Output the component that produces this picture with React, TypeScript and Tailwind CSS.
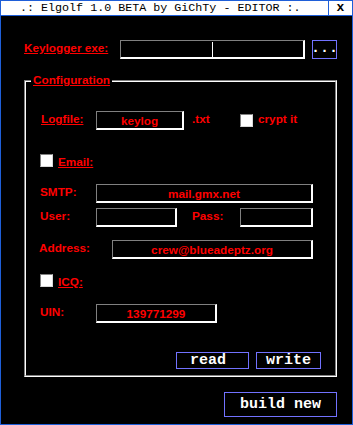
const sans = { fontFamily: "'Liberation Sans', Arial, sans-serif" }
const mono = { fontFamily: "'Liberation Mono', 'Courier New', monospace" }

const Field = ({ w, value }: { w: string; value?: string }) => (
  <div
    className={`${w} h-[19px] border-t border-l border-r-2 border-b-2 border-t-[#808080] border-l-[#808080] border-r-white border-b-white flex items-center justify-center text-[11.75px] leading-[11px] font-bold text-[#ff0000]`}
    style={sans}
  >
    {value}
  </div>
)

const Check = () => (
  <div className="w-[13px] h-[13px] bg-white border-t border-l border-r border-b border-t-[#808080] border-l-[#808080] border-r-[#d8d8d8] border-b-[#d8d8d8]" />
)

const Label = ({ children, className = "" }: { children: React.ReactNode; className?: string }) => (
  <div className={`pt-[2px] text-[11.75px] leading-[11px] font-bold text-[#ff0000] ${className}`} style={sans}>
    {children}
  </div>
)

const Btn = ({ w, h, text, className = "" }: { w: string; h: string; text: string; className?: string }) => (
  <div
    className={`${w} ${h} border border-[#7272ff] flex items-center justify-center text-white font-bold text-[15px] leading-[15px] ${className}`}
    style={mono}
  >
    {text}
  </div>
)

export default function App() {
  return (
    <div className="w-[353px] h-[425px] bg-black overflow-hidden">
      {/* title bar */}
      <div className="h-[16px] flex border border-[#1f5fd8] bg-white text-black" style={mono}>
        <div className="flex-1 pl-[19px] text-[11.7px] leading-[14px] whitespace-pre">
          .: Elgolf 1.0 BETA by GiChTy - EDITOR :.
        </div>
        <div className="w-[24px] border-l border-[#1f5fd8] flex items-center justify-center font-bold text-[13px] leading-[14px]">
          x
        </div>
      </div>

      <div className="h-[409px] flex flex-col border-l border-r border-b border-[#1f5fd8]">
        {/* keylogger exe */}
        <div className="mt-[24px] flex items-start">
          <Label className="ml-[23px] w-[96px] underline">Keylogger exe:</Label>
          <div className="w-[185px] h-[19px] border-t border-l border-r-2 border-b-2 border-t-[#808080] border-l-[#808080] border-r-white border-b-white flex items-center">
            <div className="ml-[91px] w-px h-[15px] bg-white" />
          </div>
          <Btn w="w-[25px]" h="h-[19px]" text="..." className="ml-[7px] pb-[3px]" />
        </div>

        {/* configuration group */}
        <div className="relative mt-[21px] ml-[23px] w-[313px] h-[297px] border-l border-t border-r border-b border-l-[#808080] border-t-[#808080] border-r-white border-b-white">
          <div
            className="absolute top-[-7px] left-[6px] px-[2px] bg-black text-[11.75px] leading-[11px] font-bold text-[#ff0000] underline"
            style={sans}
          >
            Configuration
          </div>
          <div className="h-full flex flex-col border-l border-t border-r border-b border-l-white border-t-white border-r-[#808080] border-b-[#808080]">
            <div className="mt-[29px] flex items-start">
              <Label className="ml-[15px] w-[55px] underline">Logfile:</Label>
              <Field w="w-[88px]" value="keylog" />
              <Label className="ml-[8px] w-[48px]">.txt</Label>
              <div className="mt-[3px]">
                <Check />
              </div>
              <Label className="ml-[5px]">crypt it</Label>
            </div>

            <div className="mt-[24px] flex items-start">
              <div className="ml-[14px]">
                <Check />
              </div>
              <Label className="ml-[5px] pt-0 underline">Email:</Label>
            </div>

            <div className="mt-[17px] flex items-start">
              <Label className="ml-[14px] w-[56px]">SMTP:</Label>
              <Field w="w-[217px]" value="mail.gmx.net" />
            </div>

            <div className="mt-[5px] flex items-start">
              <Label className="ml-[14px] w-[56px]">User:</Label>
              <Field w="w-[81px]" />
              <Label className="ml-[15px] w-[48px]">Pass:</Label>
              <Field w="w-[73px]" />
            </div>

            <div className="mt-[13px] flex items-start">
              <Label className="ml-[13px] w-[73px]">Address:</Label>
              <Field w="w-[201px]" value="crew@blueadeptz.org" />
            </div>

            <div className="mt-[15px] flex items-start">
              <div className="ml-[14px]">
                <Check />
              </div>
              <Label className="ml-[5px] pt-0 underline">ICQ:</Label>
            </div>

            <div className="mt-[17px] flex items-start">
              <Label className="ml-[14px] w-[56px]">UIN:</Label>
              <Field w="w-[121px]" value="139771299" />
            </div>

            <div className="mt-[29px] flex items-start">
              <Btn w="w-[73px]" h="h-[17px]" text="read" className="ml-[150px] pr-[9px]" />
              <Btn w="w-[65px]" h="h-[17px]" text="write" className="ml-[7px]" />
            </div>
          </div>
        </div>

        <div className="mt-[15px] flex">
          <Btn w="w-[113px]" h="h-[25px]" text="build new" className="ml-[223px]" />
        </div>
      </div>
    </div>
  )
}
